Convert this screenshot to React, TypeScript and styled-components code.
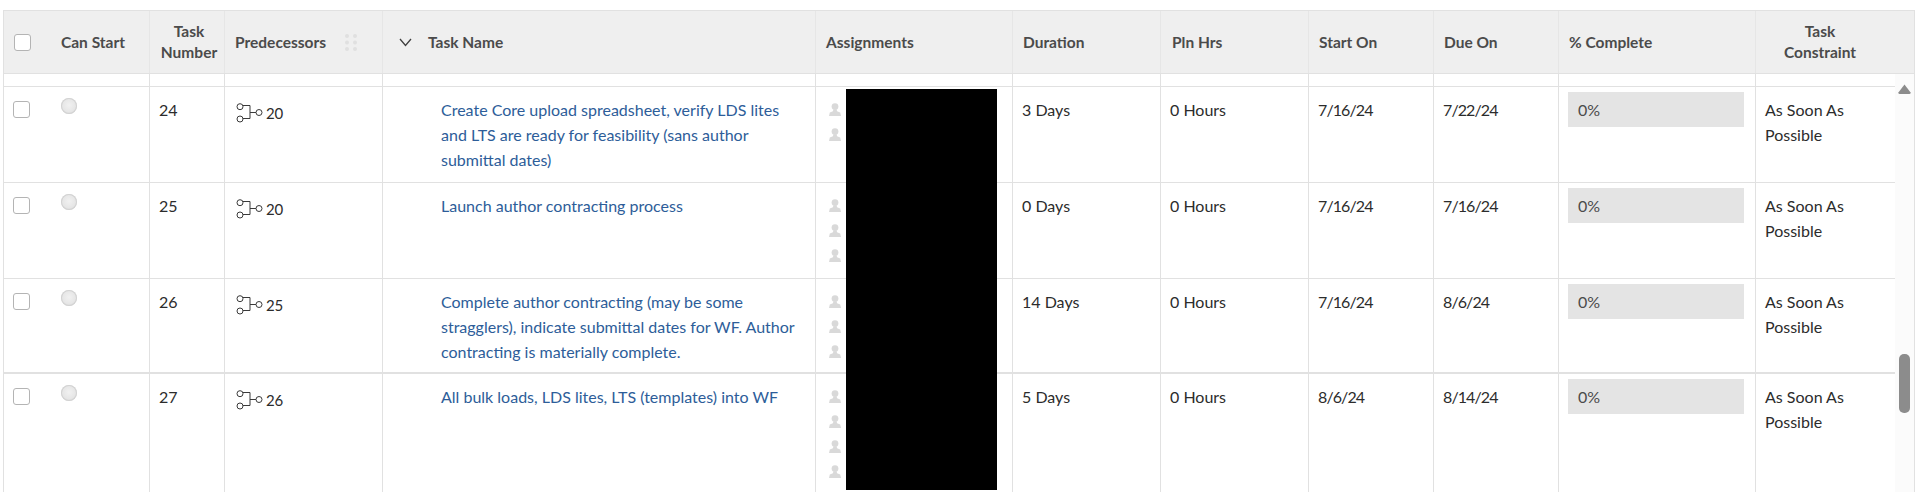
import React from "react";
import styled, { createGlobalStyle } from "styled-components";

const COLUMNS = "146px 75px 158px 433px 197px 148px 148px 125px 125px 197px 1fr";
const LINE = "#e1e1e1";

const GlobalStyle = createGlobalStyle`
  html, body {
    margin: 0;
    height: 492px;
    overflow: hidden;
    background: #fff;
    font-family: Lato, "Noto Sans", sans-serif;
  }
`;

const Page = styled.div`
  height: 492px;
  padding: 10px 0 0 3px;
  box-sizing: border-box;
  overflow: hidden;
`;

const Table = styled.div`
  position: relative;
  width: 1912px;
  height: 482px;
  box-sizing: border-box;
  border-left: 1px solid ${LINE};
  border-right: 1px solid ${LINE};
  overflow: hidden;
`;

const HeaderRow = styled.div`
  display: grid;
  grid-template-columns: ${COLUMNS};
  height: 64px;
  box-sizing: border-box;
  background: #efefef;
  border-top: 1px solid ${LINE};
  border-bottom: 1px solid ${LINE};
`;

const HeaderCell = styled.div<{ $pad?: number; $right?: number; $center?: boolean }>`
  display: flex;
  align-items: center;
  justify-content: ${(p) => (p.$center ? "center" : "flex-start")};
  text-align: ${(p) => (p.$center ? "center" : "left")};
  padding-left: ${(p) => p.$pad ?? 10}px;
  padding-right: ${(p) => p.$right ?? 0}px;
  box-sizing: border-box;
  border-right: 1px solid #e6e6e6;
  color: #4b4b4b;
  font-size: 15.5px;
  font-weight: 700;
  line-height: 21px;
  white-space: pre-line;

  &:last-child {
    border-right: none;
  }
`;

const HeaderSelect = styled(HeaderCell)`
  gap: 30px;
`;

const Body = styled.div`
  display: flex;
`;

const Rows = styled.div`
  width: 1891px;
  flex: none;
`;

const Strip = styled.div`
  display: grid;
  grid-template-columns: ${COLUMNS};
  height: 13px;
  box-sizing: border-box;
  border-bottom: 1px solid ${LINE};
`;

const Row = styled.div<{ $height: number; $border: number }>`
  display: grid;
  grid-template-columns: ${COLUMNS};
  height: ${(p) => p.$height}px;
  box-sizing: border-box;
  border-bottom: ${(p) => p.$border}px solid ${LINE};
`;

const Cell = styled.div`
  box-sizing: border-box;
  border-right: 1px solid ${LINE};
  padding: 10px 0 0 9px;
  color: #2c2c2c;
  font-size: 16px;
  line-height: 25px;
  white-space: pre-line;

  &:last-child {
    border-right: none;
  }
`;

const DateCell = styled(Cell)`
  letter-spacing: -0.9px;
`;

const SelectCell = styled(Cell)`
  display: flex;
  align-items: flex-start;
  gap: 31px;
  padding-top: 0;
`;

const Checkbox = styled.span<{ $top?: number }>`
  flex: none;
  width: 17px;
  height: 17px;
  box-sizing: border-box;
  margin-top: ${(p) => p.$top ?? 14}px;
  background: #fff;
  border: 1px solid #b4b4b4;
  border-radius: 3px;
`;

const Radio = styled.span`
  flex: none;
  width: 16px;
  height: 16px;
  margin-top: 11px;
  border-radius: 50%;
  background: radial-gradient(circle at 50% 45%, #f1f1f1 0%, #e6e6e6 55%, #c9c9c9 100%);
  box-shadow: inset 0 0 0 1px #d2d2d2;
`;

const PredecessorCell = styled(Cell)`
  display: flex;
  align-items: flex-start;
  gap: 3px;
  padding: 16px 0 0 11px;
`;

const PredecessorText = styled.span`
  font-size: 15px;
  line-height: 20px;
  letter-spacing: -0.3px;
`;

const TaskCell = styled(Cell)`
  padding-left: 58px;
  color: #2d5d99;
`;

const AssignCell = styled(Cell)`
  display: flex;
  flex-direction: column;
  padding-left: 13px;
`;

const AvatarSlot = styled.span`
  display: flex;
  align-items: center;
  height: 25px;
`;

const PercentBox = styled.div`
  width: 176px;
  height: 35px;
  padding-left: 10px;
  box-sizing: border-box;
  background: #e4e4e4;
  color: #4b4b4b;
  line-height: 35px;
`;

const PercentCell = styled(Cell)`
  padding-top: 5px;
`;

const Track = styled.div`
  flex: none;
  width: 19px;
  height: 418px;
  box-sizing: border-box;
  padding-top: 10px;
  background: #fbfbfb;
  display: flex;
  flex-direction: column;
  align-items: center;
`;

const ThumbUp = styled.svg`
  flex: none;
  display: block;
`;

const Thumb = styled.div`
  flex: none;
  width: 11px;
  height: 59px;
  margin-top: 260px;
  border-radius: 5px;
  background: #8c8c8c;
`;

const DragDots = styled.svg`
  display: block;
  margin-left: 19px;
`;

const Chevron = styled.svg`
  display: block;
  margin-right: 16px;
`;

// redaction block from the original screenshot, spans several rows
const Redaction = styled.div`
  position: absolute;
  left: 842px;
  top: 79px;
  width: 151px;
  height: 401px;
  background: #000;
`;

const Avatar = () => (
  <svg width="12" height="13" viewBox="0 0 12 13">
    <circle cx="6" cy="3.6" r="3.4" fill="#d9d9d9" />
    <path d="M4.4 6.6h3.2l.5 1.6L11.2 9.6 12 13H0l.8-3.4 3.1-1.4z" fill="#d9d9d9" />
  </svg>
);

const PredecessorIcon = () => (
  <svg width="27" height="20" viewBox="0 0 27 20" fill="none" stroke="#3a3a3a" strokeWidth="1">
    <circle cx="4" cy="3.7" r="3" />
    <circle cx="4" cy="16" r="3" />
    <circle cx="23" cy="9.5" r="3" />
    <path d="M7 2.5h7v13H7M14 9.5h6" />
  </svg>
);

type Task = {
  num: number;
  pred: number;
  name: string;
  people: number;
  duration: string;
  start: string;
  due: string;
  height: number;
  border: number;
};

const tasks: Task[] = [
  {
    num: 24,
    pred: 20,
    name: "Create Core upload spreadsheet, verify LDS lites\nand LTS are ready for feasibility (sans author\nsubmittal dates)",
    people: 2,
    duration: "3 Days",
    start: "7/16/24",
    due: "7/22/24",
    height: 96,
    border: 1,
  },
  {
    num: 25,
    pred: 20,
    name: "Launch author contracting process",
    people: 3,
    duration: "0 Days",
    start: "7/16/24",
    due: "7/16/24",
    height: 96,
    border: 1,
  },
  {
    num: 26,
    pred: 25,
    name: "Complete author contracting (may be some\nstragglers), indicate submittal dates for WF. Author\ncontracting is materially complete.",
    people: 3,
    duration: "14 Days",
    start: "7/16/24",
    due: "8/6/24",
    height: 95,
    border: 2,
  },
  {
    num: 27,
    pred: 26,
    name: "All bulk loads, LDS lites, LTS (templates) into WF",
    people: 4,
    duration: "5 Days",
    start: "8/6/24",
    due: "8/14/24",
    height: 118,
    border: 0,
  },
];

const App = () => {
  return (
    <Page>
      <GlobalStyle />
      <Table>
        <HeaderRow>
          <HeaderSelect>
            <Checkbox $top={0} />
            Can Start
          </HeaderSelect>
          <HeaderCell $pad={4} $center>
            {"Task\nNumber"}
          </HeaderCell>
          <HeaderCell $pad={10}>
            Predecessors
            <DragDots width="12" height="17" viewBox="0 0 12 17" fill="#e0e0e0">
              {[2, 8.5, 15].map((y) => (
                <React.Fragment key={y}>
                  <circle cx="2" cy={y} r="2" />
                  <circle cx="10" cy={y} r="2" />
                </React.Fragment>
              ))}
            </DragDots>
          </HeaderCell>
          <HeaderCell $pad={16}>
            <Chevron width="13" height="9" viewBox="0 0 13 9" fill="none" stroke="#3f3f3f" strokeWidth="1.3">
              <path d="M1 1l5.5 6.5L12 1" />
            </Chevron>
            Task Name
          </HeaderCell>
          <HeaderCell>Assignments</HeaderCell>
          <HeaderCell>Duration</HeaderCell>
          <HeaderCell $pad={11}>Pln Hrs</HeaderCell>
          <HeaderCell>Start On</HeaderCell>
          <HeaderCell>Due On</HeaderCell>
          <HeaderCell>% Complete</HeaderCell>
          <HeaderCell $pad={0} $right={30} $center>
            {"Task\nConstraint"}
          </HeaderCell>
        </HeaderRow>
        <Body>
          <Rows>
            <Strip>
              {Array.from({ length: 11 }, (_, i) => (
                <Cell key={i} />
              ))}
            </Strip>
            {tasks.map((t) => (
              <Row key={t.num} $height={t.height} $border={t.border}>
                <SelectCell>
                  <Checkbox />
                  <Radio />
                </SelectCell>
                <Cell>{t.num}</Cell>
                <PredecessorCell>
                  <PredecessorIcon />
                  <PredecessorText>{t.pred}</PredecessorText>
                </PredecessorCell>
                <TaskCell>{t.name}</TaskCell>
                <AssignCell>
                  {Array.from({ length: t.people }, (_, i) => (
                    <AvatarSlot key={i}>
                      <Avatar />
                    </AvatarSlot>
                  ))}
                </AssignCell>
                <Cell>{t.duration}</Cell>
                <Cell>0 Hours</Cell>
                <DateCell>{t.start}</DateCell>
                <DateCell>{t.due}</DateCell>
                <PercentCell>
                  <PercentBox>0%</PercentBox>
                </PercentCell>
                <Cell>{"As Soon As\nPossible"}</Cell>
              </Row>
            ))}
          </Rows>
          <Track>
            <ThumbUp width="13" height="10" viewBox="0 0 13 10" fill="#8c8c8c">
              <path d="M6.5 0.5L12.6 8.6Q13 10 11.5 10H1.5Q0 10 0.4 8.6z" />
            </ThumbUp>
            <Thumb />
          </Track>
        </Body>
        <Redaction />
      </Table>
    </Page>
  );
};

export default App;
